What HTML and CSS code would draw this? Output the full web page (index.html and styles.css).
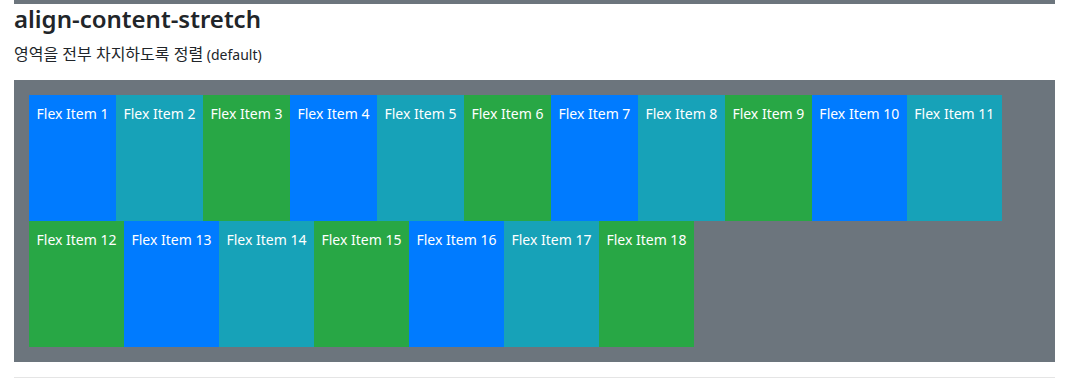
FILE: index.html
```html
<!DOCTYPE html>
<html lang="ko">
<head>
    <meta charset="UTF-8">
    <meta name="viewport" content="width=device-width, initial-scale=1.0">
    <title>align-content-stretch</title>
    <link rel="stylesheet" href="styles.css">
</head>
<body>
    <div class="container">
        <div class="prev-box"></div>

        <h4>align-content-stretch</h4>
        <p><span class="ko">영역을 전부 차지하도록 정렬</span> (default)</p>

        <div class="flex-box">
            <div class="item blue">Flex Item 1</div>
            <div class="item info">Flex Item 2</div>
            <div class="item green">Flex Item 3</div>
            <div class="item blue">Flex Item 4</div>
            <div class="item info">Flex Item 5</div>
            <div class="item green">Flex Item 6</div>
            <div class="item blue">Flex Item 7</div>
            <div class="item info">Flex Item 8</div>
            <div class="item green">Flex Item 9</div>
            <div class="item blue">Flex Item 10</div>
            <div class="item info">Flex Item 11</div>
            <div class="item green">Flex Item 12</div>
            <div class="item blue">Flex Item 13</div>
            <div class="item info">Flex Item 14</div>
            <div class="item green">Flex Item 15</div>
            <div class="item blue">Flex Item 16</div>
            <div class="item info">Flex Item 17</div>
            <div class="item green">Flex Item 18</div>
        </div>

        <hr>
    </div>
</body>
</html>
```

FILE: styles.css
```css
body {
    margin: 0;
    font-family: "Noto Sans", "Noto Sans CJK KR", sans-serif;
    font-size: 14px;
    line-height: 1.5;
    color: #212529;
    background-color: #fff;
}

.container {
    padding: 0 14px;
}

.prev-box {
    height: 4px;
    background-color: #6c757d;
}

h4 {
    margin: 0 0 8px 0;
    padding-top: 1px;
    font-size: 24px;
    font-weight: 600;
    line-height: 1.2;
}

p {
    height: 21px;
    margin: 0 0 17px 0;
}

.ko {
    font-size: 16px;
}

.flex-box {
    display: flex;
    flex-wrap: wrap;
    align-content: stretch;
    height: 252px;
    padding: 15px;
    background-color: #6c757d;
}

.item {
    padding: 8px 7.5px;
    color: #fff;
}

.blue {
    background-color: #007bff;
}

.info {
    background-color: #17a2b8;
}

.green {
    background-color: #28a745;
}

hr {
    margin: 15px 0 0 0;
    border: 0;
    border-top: 1px solid rgba(0,0,0,.1);
}
```
